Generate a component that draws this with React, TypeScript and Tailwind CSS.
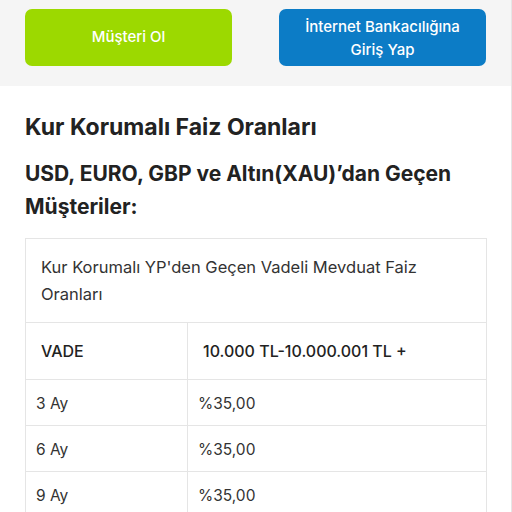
export default function App() {
  const rows = [
    ["3 Ay", "%35,00"],
    ["6 Ay", "%35,00"],
    ["9 Ay", "%35,00"],
  ];
  return (
    <div className="w-[512px] h-[512px] overflow-hidden bg-white border-r border-[#e6e6e6]" style={{ fontFamily: "Inter, 'Noto Sans', sans-serif" }}>
      <div className="bg-[#f5f5f5] h-[86px] px-[25px] pt-[9px] flex gap-[47px]">
        <div className="w-[208px] h-[57px] rounded-[7px] bg-[#9cd900] flex items-center justify-center text-white text-[15px] font-medium">
          Müşteri Ol
        </div>
        <div className="w-[208px] h-[57px] rounded-[7px] bg-[#0c7cc6] flex flex-col items-center justify-center text-white text-[15px] font-medium leading-[23px] text-center">
          <span>İnternet Bankacılığına</span>
          <span>Giriş Yap</span>
        </div>
      </div>
      <div className="px-[25px]">
        <h1 className="text-[23px] font-bold text-[#222] leading-[26px] mt-[28px]">Kur Korumalı Faiz Oranları</h1>
        <h2 className="text-[21px] font-bold text-[#222] leading-[33px] mt-[17px]">
          USD, EURO, GBP ve Altın(XAU)’dan Geçen<br />Müşteriler:
        </h2>
        <div className="mt-[15px] w-[462px] border border-[#e5e5e5] text-[#333]">
          <div className="px-[15px] pt-[15px] pb-[14px] text-[16.5px] leading-[27px] border-b border-[#e5e5e5]">
            Kur Korumalı YP'den Geçen Vadeli Mevduat Faiz<br />Oranları
          </div>
          <div className="flex h-[57px] border-b border-[#e5e5e5] text-[16px] font-medium text-[#222]">
            <div className="w-[162px] border-r border-[#e5e5e5] flex items-center pl-[15px]">VADE</div>
            <div className="flex-1 flex items-center pl-[15px]">10.000 TL-10.000.001 TL +</div>
          </div>
          {rows.map(([a, b], i) => (
            <div key={i} className="flex h-[46px] border-b border-[#e5e5e5] text-[15.5px] text-[#333]">
              <div className="w-[162px] border-r border-[#e5e5e5] flex items-center pl-[10px] pt-[2px]">{a}</div>
              <div className="flex-1 flex items-center pl-[10px] pt-[2px]">{b}</div>
            </div>
          ))}
        </div>
      </div>
    </div>
  );
}
